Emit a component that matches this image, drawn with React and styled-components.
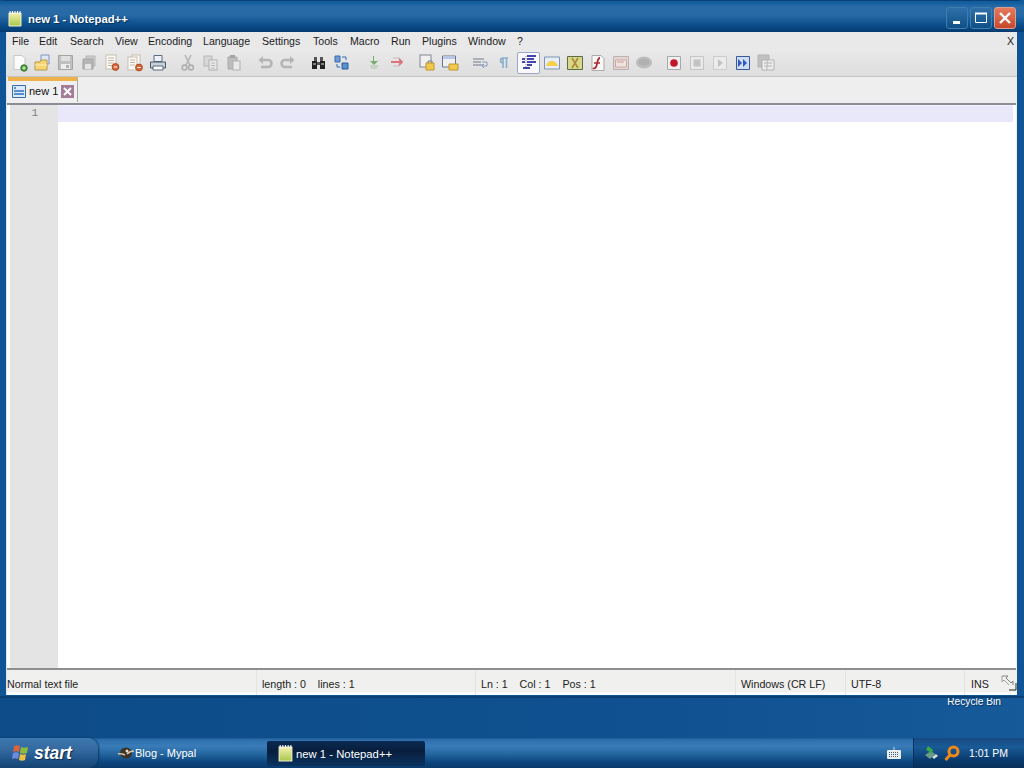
import styled, { createGlobalStyle } from "styled-components";

const GlobalStyle = createGlobalStyle`
    html, body {
        margin: 0;
        height: 100%;
        overflow: hidden;
    }
    body {
        font-family: "Liberation Sans", Arial, sans-serif;
    }
`;

const Screen = styled.div`
    width: 1024px;
    height: 768px;
    display: flex;
    flex-direction: column;
    background: #0e4e8b;
    overflow: hidden;
`;

const Desktop = styled.div`
    height: 738px;
    display: flex;
    flex-direction: column;
    background: linear-gradient(to right, #0d4c88, #0f5090 60%, #165a9a);
`;

const Window = styled.div`
    position: relative;
    z-index: 1;
    height: 698px;
    flex: none;
    display: flex;
    flex-direction: column;
    border-radius: 6px 6px 0 0;
    background: #0f5494;
    border-top: 1px solid #0a3f78;
    border-bottom: 2px solid #0a3f74;
    box-sizing: border-box;
`;

const TitleBar = styled.div`
    height: 31px;
    flex: none;
    box-sizing: border-box;
    display: flex;
    align-items: center;
    padding: 4px 8px 0 7px;
    gap: 5px;
    background: linear-gradient(to bottom, #125a98 0, #12609f 2px, #2a6ba7 6px, #276aa6 14px, #0f5390 22px, #07427c 28px, #063b70 31px);
    color: #fff;
    font-size: 11.3px;
    font-weight: 700;
`;

const TitleText = styled.span`
    flex: 1;
    text-shadow: 1px 1px 1px #06305c;
`;

const WinButtons = styled.div`
    display: flex;
    gap: 2px;
    margin-top: -1px;
`;

const WinButton = styled.div`
    width: 20px;
    height: 20px;
    border-radius: 3px;
    display: grid;
    place-items: center;
    border: 1px solid ${(p) => (p.$close ? "#d8a090" : "#3f7cb0")};
    background: ${(p) => (p.$close ? "linear-gradient(#e47a5c, #c8482c)" : "linear-gradient(#2f70aa, #0f5088)")};
`;

const Body = styled.div`
    flex: 1;
    min-height: 0;
    display: flex;
    flex-direction: column;
    margin: 0 7px 1px 6px;
    border-left: 1px solid #d8e4f0;
    background: #eeeeee;
`;

const MenuBar = styled.div`
    height: 20px;
    flex: none;
    box-sizing: border-box;
    display: flex;
    align-items: center;
    padding: 0 0 2px 5px;
    background: #e9e9ea;
    font-size: 10.6px;
    color: #1c1c1c;
`;

const MenuItem = styled.span`
    width: ${(p) => p.$w}px;
    white-space: nowrap;
`;

const CloseMark = styled.span`
    margin-left: auto;
    margin-right: 3px;
`;

const ToolBar = styled.div`
    height: 25px;
    flex: none;
    box-sizing: border-box;
    display: flex;
    align-items: flex-start;
    padding-left: 1px;
    background: linear-gradient(to bottom, #e8e8e8, #dedede);
    border-bottom: 1px solid #c4c4c4;
`;

const ToolGroup = styled.div`
    display: flex;
    margin-left: ${(p) => p.$gap || 0}px;
`;

const ToolButton = styled.div`
    width: 23px;
    height: 22px;
    box-sizing: border-box;
    display: grid;
    place-items: center;
    opacity: ${(p) => (p.$dim ? 0.75 : 1)};
    ${(p) => p.$active && `
        background: #fafafe;
        border: 1px solid #9aa8cc;
        border-radius: 2px;
    `}
`;

const TabBar = styled.div`
    height: 26px;
    flex: none;
    display: flex;
    align-items: flex-start;
    padding-left: 1px;
    box-sizing: border-box;
    background: #eeeeee;
`;

const Tab = styled.div`
    width: 70px;
    height: 25px;
    box-sizing: border-box;
    display: flex;
    align-items: center;
    gap: 3px;
    padding: 0 0 1px 4px;
    background: #f0f0f0;
    border-top: 4px solid #efb24a;
    border-right: 1px solid #a8a8a8;
    font-size: 11px;
    color: #111;
`;

const Editor = styled.div`
    flex: 1;
    min-height: 0;
    display: flex;
    background: #fff;
    border-top: 2px solid #8c8c94;
    border-bottom: 2px solid #8e8e8e;
    margin-right: 1px;
`;

const Gutter = styled.div`
    width: 48px;
    margin-left: 3px;
    flex: none;
    background: #e4e4e4;
    box-sizing: border-box;
    padding: 2px 20px 0 0;
    text-align: right;
    font-family: "Liberation Mono", monospace;
    font-size: 11px;
    color: #808080;
`;

const TextArea = styled.div`
    flex: 1;
    padding-right: 3px;
`;

const CurrentLine = styled.div`
    height: 16px;
    background: #e8e8fa;
    border-top: 1px solid #f2f2fc;
`;

const StatusBar = styled.div`
    height: 25px;
    flex: none;
    display: flex;
    background: linear-gradient(to bottom, #f0f0ee 88%, #fbfbfb 88%);
    font-size: 10.7px;
    color: #222;
`;

const StatusCell = styled.div`
    width: ${(p) => p.$w}px;
    flex: none;
    box-sizing: border-box;
    display: flex;
    align-items: center;
    padding: 2px 0 0 ${(p) => p.$pad ?? 5}px;
    border-right: 1px solid ${(p) => (p.$last ? "transparent" : "#e4e4e2")};
    white-space: pre;
`;

const Grip = styled.div`
    flex: 1;
    display: flex;
    align-items: center;
    justify-content: flex-end;
`;

const RecycleLabel = styled.div`
    align-self: flex-end;
    margin: -3px 23px 0 0;
    font-size: 10.2px;
    line-height: 13px;
    color: #fff;
    text-shadow: 1px 1px 1px #083560;
`;

const Taskbar = styled.div`
    height: 30px;
    flex: none;
    display: flex;
    background: linear-gradient(to bottom, #1d5a96 0, #2e6fae 2px, #3a7cb8 8px, #24669f 16px, #0c4680 24px, #0a3a6c 30px);
    color: #fff;
    font-size: 11px;
`;

const StartButton = styled.div`
    width: 98px;
    flex: none;
    box-sizing: border-box;
    display: flex;
    align-items: center;
    gap: 4px;
    padding-left: 11px;
    border-radius: 0 10px 10px 0;
    background: linear-gradient(to bottom, #3d78b0, #33699f 40%, #1e5387 75%, #154374);
    box-shadow: 1px 0 2px #0a3560;
    font-size: 17.5px;
    font-weight: 700;
    font-style: italic;
    text-shadow: 1px 1px 1px #0a2c50;
`;

const TaskButton = styled.div`
    width: ${(p) => p.$w}px;
    height: 25px;
    flex: none;
    align-self: ${(p) => (p.$active ? "center" : "flex-start")};
    margin: ${(p) => (p.$active ? "1px 0 0 7px" : "2px 0 0 12px")};
    box-sizing: border-box;
    display: flex;
    align-items: center;
    gap: ${(p) => (p.$active ? 2 : 0)}px;
    padding-left: ${(p) => (p.$active ? 10 : 7)}px;
    border-radius: 2px;
    font-size: ${(p) => (p.$active ? 11.3 : 11)}px;
    background: ${(p) => (p.$active ? "linear-gradient(to bottom, #0a2a52, #081d3c 40%, #0a3360)" : "transparent")};
`;

const QuickTray = styled.div`
    margin-left: auto;
    display: flex;
    align-items: center;
    padding-right: 12px;
`;

const SystemTray = styled.div`
    width: 111px;
    flex: none;
    box-sizing: border-box;
    display: flex;
    align-items: center;
    gap: 2px;
    padding-left: 9px;
    background: linear-gradient(to bottom, #154a82, #1a5a96 30%, #0a3c70 70%, #082f5a);
    border-left: 1px solid #07305c;
    font-size: 10.5px;
`;

const Clock = styled.span`
    margin-left: 6px;
`;

const Svg = ({ children, size = 18 }) => (
    <svg width={size} height={size} viewBox="0 0 18 18" fill="none">
        {children}
    </svg>
);

const Sheet = ({ x = 4, y = 1, w = 10, h = 13, fill = "#fafafa", stroke = "#a8a8a8" }) => (
    <rect x={x} y={y} width={w} height={h} fill={fill} stroke={stroke} />
);

const Lines = ({ x, y, w, n = 3, color = "#777" }) => (
    <path d={Array.from({ length: n }, (_, i) => `M${x} ${y + i * 2.5}h${w}`).join("")} stroke={color} />
);

const icons = {
    newFile: (
        <Svg>
            <path d="M3 1.5h8l3 3v11H3z" fill="#fbfbfb" stroke="#c8c8c8" />
            <circle cx="13" cy="14" r="3.2" fill="#58a848" stroke="#2d6e2a" />
            <path d="M11.5 14h3M13 12.5v3" stroke="#e0f4d8" />
        </Svg>
    ),
    open: (
        <Svg>
            <path d="M7 1h8v9H7z" fill="#dfe6f4" stroke="#7f93c0" />
            <path d="M1 8h5l1-2h6v10H1z" fill="#f6d572" stroke="#b49a4c" />
            <path d="M1 11h12" stroke="#fff0b8" />
        </Svg>
    ),
    save: (
        <Svg>
            <path d="M1.5 1.5h14v14h-14z" fill="#b4b4b4" stroke="#909090" />
            <path d="M4 2h9v5H4z" fill="#dedede" />
            <path d="M4 10h9v5H4z" fill="#f2f2f2" />
            <path d="M9 11h3v3H9z" fill="#a0a0a0" />
        </Svg>
    ),
    saveAll: (
        <Svg>
            <path d="M6 2h9v10H6z" fill="#c4c4c4" stroke="#a8a8a8" />
            <path d="M3 5h10v10H3z" fill="#a8a8a8" stroke="#8c8c8c" />
            <path d="M5 10h6v5H5z" fill="#e6e6e6" />
        </Svg>
    ),
    close: (
        <Svg>
            <Sheet x={3} y={1} w={10} h={14} stroke="#c8c0b0" />
            <Lines x={5} y={4} w={6} n={4} color="#c4b498" />
            <circle cx="12.5" cy="13" r="3.4" fill="#d8683c" stroke="#b04a20" />
            <path d="M10.8 13h3.4" stroke="#fff" />
        </Svg>
    ),
    closeAll: (
        <Svg>
            <Sheet x={6} y={1} w={8} h={12} stroke="#c8c0b0" />
            <Sheet x={2} y={3} w={9} h={13} stroke="#c8c0b0" />
            <Lines x={4} y={6} w={5} n={3} color="#c4b498" />
            <circle cx="13" cy="13.5" r="3.4" fill="#d8683c" stroke="#b04a20" />
            <path d="M11.3 13.5h3.4" stroke="#fff" />
        </Svg>
    ),
    print: (
        <Svg>
            <path d="M5 1.5h8v6H5z" fill="#eef2f8" stroke="#5a6a80" />
            <path d="M1.5 8h15v6h-15z" fill="#c8d0d8" stroke="#4c5868" />
            <path d="M4 12h10v4H4z" fill="#fafafa" stroke="#5a6a80" />
        </Svg>
    ),
    cut: (
        <Svg>
            <path d="M12 1L7 11M6 1l5 10" stroke="#a4a4a4" strokeWidth="1.6" />
            <circle cx="5.5" cy="13.5" r="2.4" stroke="#a0a0a0" strokeWidth="1.6" />
            <circle cx="12" cy="13.5" r="2.4" stroke="#a0a0a0" strokeWidth="1.6" />
        </Svg>
    ),
    copy: (
        <Svg>
            <Sheet x={2} y={2} w={8} h={10} fill="#d4d4d4" stroke="#a8a8a8" />
            <Sheet x={7} y={6} w={8} h={10} fill="#ececec" stroke="#a0a0a0" />
            <Lines x={9} y={9} w={4} color="#a8a8a8" />
        </Svg>
    ),
    paste: (
        <Svg>
            <path d="M3 3h9v12H3z" fill="#b0b0b0" stroke="#989898" />
            <path d="M5 1h5v3H5z" fill="#8e8e8e" />
            <Sheet x={8} y={7} w={7} h={9} fill="#ececec" stroke="#a0a0a0" />
        </Svg>
    ),
    undo: (
        <Svg>
            <path d="M4 6h8a3 3 0 0 1 0 7H5" stroke="#a6a6a6" strokeWidth="2.6" />
            <path d="M7 2L2.5 6 7 10z" fill="#a6a6a6" />
        </Svg>
    ),
    redo: (
        <Svg>
            <path d="M14 6H6a3 3 0 0 0 0 7h7" stroke="#a6a6a6" strokeWidth="2.6" />
            <path d="M11 2l4.5 4L11 10z" fill="#a6a6a6" />
        </Svg>
    ),
    find: (
        <Svg>
            <path d="M2 7h5v8H2zM10 7h5v8h-5z" fill="#222" />
            <path d="M4 3h3v4H4zM10 3h3v4h-3zM7 8h3v3H7z" fill="#555" />
            <path d="M3 10h3M11 10h3" stroke="#ddd" />
        </Svg>
    ),
    replace: (
        <Svg>
            <path d="M2 2h5v6H2z" fill="#6e9ad8" stroke="#3c68a8" />
            <path d="M9 9h6v6H9z" fill="#5a92d0" stroke="#2c5c9c" />
            <path d="M9 3h4v3M7 13H4V10" stroke="#2c6cb8" />
        </Svg>
    ),
    zoomIn: (
        <Svg>
            <path d="M9 2v5h4l-4 4-4-4h3V2z" fill="#4f9a48" />
            <path d="M5 12h8M6 14h6" stroke="#9cb898" />
            <path d="M3 6h2M13 6h2" stroke="#c8d8c8" />
        </Svg>
    ),
    zoomOut: (
        <Svg>
            <path d="M3 8h11M11 5l3 3-3 3" stroke="#d8505a" strokeWidth="1.8" />
            <path d="M5 4h7M5 12h7" stroke="#c4a8ac" />
        </Svg>
    ),
    syncV: (
        <Svg>
            <Sheet x={2} y={1} w={11} h={12} fill="#f0f0f0" stroke="#808890" />
            <path d="M8 9h8v7H8z" fill="#f2c84c" stroke="#c09830" />
            <path d="M10 9V7h4v2" stroke="#808080" />
        </Svg>
    ),
    syncH: (
        <Svg>
            <path d="M1.5 2h13v11h-13z" fill="#f0f0f0" stroke="#687890" />
            <path d="M2 2h12v3H2z" fill="#b8c8e4" />
            <path d="M8 10h9v6H8z" fill="#f2c84c" stroke="#c09830" />
        </Svg>
    ),
    wrap: (
        <Svg>
            <path d="M1 5h11M1 8h8M1 11h10" stroke="#505868" />
            <path d="M10 8h5v4h-5M12 10l-2 2 2 2" stroke="#6088b8" />
        </Svg>
    ),
    pilcrow: (
        <Svg>
            <path d="M8 4h5M8 4a2.500 2.500 0 0 0 0 5M8 4v10M11.500 4v10" stroke="#6c9cc8" strokeWidth="1.600" />
        </Svg>
    ),
    indent: (
        <Svg>
            <path d="M6 2v14" stroke="#888" strokeDasharray="1 1" />
            <path d="M7 2h9M7 5h7M7 8h9M7 11h5M3 14h7M2 5h3M2 8h3" stroke="#0a0a90" strokeWidth="1.6" />
        </Svg>
    ),
    lang: (
        <Svg>
            <path d="M1.5 3h15v12h-15z" fill="#e8eef8" stroke="#7f93b0" />
            <path d="M3 12c1-4 3-5 6-5s5 2 6 5z" fill="#f4d04c" />
        </Svg>
    ),
    docMap: (
        <Svg>
            <path d="M1.5 2.5h15v13h-15z" fill="#d8d888" stroke="#5c6c44" />
            <path d="M6 4l3 5 3 5M12 4l-6 10" stroke="#a88a38" strokeWidth="1.6" />
        </Svg>
    ),
    funcList: (
        <Svg>
            <path d="M3 1.5h9l3 3v12H3z" fill="#f8f8f8" stroke="#b0a8a8" />
            <path d="M11 4C8 4 9 9 7 13c-.5 1-2 2-3 1" stroke="#b02830" strokeWidth="1.8" />
            <path d="M5 9h6" stroke="#b02830" strokeWidth="1.5" />
        </Svg>
    ),
    folderWs: (
        <Svg>
            <path d="M1.5 2.5h15v13h-15z" fill="#e2d0cc" stroke="#b0a0a0" />
            <path d="M3.500 6h11v7h-11z" fill="#f4e4e0" stroke="#c09890" />
            <path d="M5 8h7" stroke="#c08880" />
        </Svg>
    ),
    monitor: (
        <Svg>
            <ellipse cx="9" cy="8.500" rx="8" ry="6" fill="#b0b0b0" />
            <ellipse cx="9" cy="8" rx="5.500" ry="3.500" fill="#a0a0a0" />
        </Svg>
    ),
    record: (
        <Svg>
            <path d="M2.500 2.500h13v13h-13z" fill="#f0f0f0" stroke="#a8a8a8" />
            <circle cx="9" cy="9" r="3.800" fill="#c01828" />
        </Svg>
    ),
    stop: (
        <Svg>
            <path d="M2.500 2.500h13v13h-13z" fill="#ececec" stroke="#bcbcbc" />
            <path d="M5.500 5.500h7v7h-7z" fill="#b8b8b8" />
        </Svg>
    ),
    play: (
        <Svg>
            <path d="M2.500 2.500h13v13h-13z" fill="#efefef" stroke="#c4c4c4" />
            <path d="M7 5l5 4-5 4z" fill="#b8b8b8" />
        </Svg>
    ),
    playMulti: (
        <Svg>
            <path d="M2.500 2.500h13v13h-13z" fill="#d0dcf0" stroke="#3858a0" />
            <path d="M4 5l4 4-4 4zM9 5l4 4-4 4z" fill="#2c58c0" />
        </Svg>
    ),
    saveMacro: (
        <Svg>
            <path d="M1 1h11v12H1z" fill="#b4b4b4" stroke="#a4a4a4" />
            <path d="M5 6h12v10H5z" fill="#efefef" stroke="#a4a4a4" />
            <path d="M7 9h8M7 12h8M10 6v10" stroke="#a8a8a8" />
        </Svg>
    ),
};

const toolGroups = [
    { gap: 0, items: ["newFile", "open", "save", "saveAll", "close", "closeAll", "print"] },
    { gap: 7, items: ["cut", "copy", "paste"] },
    { gap: 8, items: ["undo", "redo"] },
    { gap: 8, items: ["find", "replace"] },
    { gap: 9, items: ["zoomIn", "zoomOut"] },
    { gap: 7, items: ["syncV", "syncH"] },
    { gap: 8, items: ["wrap", "pilcrow"] },
    { gap: 2, items: ["indent", "lang", "docMap", "funcList", "folderWs", "monitor"] },
    { gap: 7, items: ["record", "stop", "play", "playMulti", "saveMacro"] },
];

const dimmed = ["save", "saveAll", "cut", "copy", "paste", "undo", "redo", "wrap", "pilcrow", "zoomIn", "zoomOut", "folderWs", "monitor", "stop", "play", "saveMacro"];

const menus = [
    ["File", 27], ["Edit", 31], ["Search", 45], ["View", 33], ["Encoding", 55], ["Language", 59],
    ["Settings", 51], ["Tools", 37], ["Macro", 41], ["Run", 31], ["Plugins", 46], ["Window", 49], ["?", 10],
];

const NotepadIcon = ({ size = 16 }) => (
    <svg width={size} height={size} viewBox="0 0 16 16">
        <path d="M2 2h12v13H2z" fill="url(#padFill)" stroke="#f4f0d0" />
        <defs>
            <linearGradient id="padFill" x1="0" y1="0" x2="0" y2="1">
                <stop offset="0" stopColor="#f4f0b0" />
                <stop offset="1" stopColor="#a8c848" />
            </linearGradient>
        </defs>
        <path d="M3 0v3M5.500 0v3M8 0v3M10.500 0v3M13 0v3" stroke="#fff" />
    </svg>
);

const TabFileIcon = () => (
    <svg width="14" height="15" viewBox="0 0 14 15">
        <path d="M.5 1.500h13v12H.5z" fill="#dceaf8" stroke="#3c6ca8" />
        <path d="M2 4h2M2 7h10M2 10h10" stroke="#2c70c0" strokeWidth="1.500" />
    </svg>
);

const TabClose = () => (
    <svg width="13" height="13" viewBox="0 0 13 13">
        <rect width="13" height="13" fill="#a47c98" />
        <path d="M3 3l7 7M10 3l-7 7" stroke="#fff" strokeWidth="2" />
    </svg>
);

const StartFlag = () => (
    <svg width="19" height="20" viewBox="0 0 19 20">
        <path d="M3 3c2-1 4-1 6 0l-1 6c-2-1-4-1-6 0z" fill="#d8643c" />
        <path d="M10 4c2 1 4 1 7 0l-1 6c-3 1-5 1-7 0z" fill="#8cbc3c" />
        <path d="M2 10c2-1 4-1 6 0l-1 6c-2-1-4-1-6 0z" fill="#6c8ce0" />
        <path d="M9 11c2 1 4 1 6 0l-1 6c-2 1-4 1-6 0z" fill="#f0c040" />
    </svg>
);

const FoxIcon = () => (
    <svg width="18" height="14" viewBox="0 0 18 14">
        <ellipse cx="9" cy="7" rx="6" ry="5.500" fill="#3c3428" />
        <path d="M1 8c3-1 5 0 7 1M17 5c-3 0-5 1-7 3" stroke="#d8c8a8" strokeWidth="1.500" />
        <circle cx="10" cy="5" r="1.500" fill="#e8e0c8" />
    </svg>
);

const KeyboardIcon = () => (
    <svg width="14" height="12" viewBox="0 0 14 12">
        <path d="M7 0v3" stroke="#c8d8e8" />
        <rect y="3" width="14" height="9" rx="1" fill="#e8eef4" />
        <path d="M2 5.500h10M2 7.500h10M2 9.500h10" stroke="#44586c" strokeDasharray="1 1" />
    </svg>
);

const SafeIcon = () => (
    <svg width="18" height="18" viewBox="0 0 18 18">
        <path d="M2 11l6-4 4 3-5 5z" fill="#6c9c88" />
        <path d="M5 2l5 4-2 5-1-3-4-2z" fill="#38a848" />
        <path d="M9 13l4-3 2 2-4 3z" fill="#d0dcd8" />
    </svg>
);

const SearchTrayIcon = () => (
    <svg width="18" height="18" viewBox="0 0 18 18">
        <circle cx="10.500" cy="7.500" r="4.500" fill="none" stroke="#f08818" strokeWidth="3" />
        <path d="M7 11l-4.500 5" stroke="#f08818" strokeWidth="3" />
    </svg>
);

const ResizeIcon = () => (
    <svg width="16" height="16" viewBox="0 0 16 16" fill="none">
        <path d="M1 1h6l-2 2 5 5 2-2v4" stroke="#808080" />
        <path d="M1 1v6l2-2 5 5" stroke="#a0a0a0" />
        <path d="M15 8v7H8" stroke="#222" />
    </svg>
);

export default function App() {
    return (
        <Screen>
            <GlobalStyle />
            <Desktop>
                <Window>
                    <TitleBar>
                        <NotepadIcon />
                        <TitleText>new 1 - Notepad++</TitleText>
                        <WinButtons>
                            <WinButton>
                                <svg width="10" height="12" viewBox="0 0 10 12">
                                    <path d="M1 9h7v3H1z" fill="#fff" />
                                </svg>
                            </WinButton>
                            <WinButton>
                                <svg width="14" height="14" viewBox="0 0 14 14" fill="none">
                                    <path d="M1.500 2.500h11v9h-11z" stroke="#fff" />
                                    <path d="M1 2.500h12" stroke="#fff" strokeWidth="2" />
                                </svg>
                            </WinButton>
                            <WinButton $close>
                                <svg width="14" height="14" viewBox="0 0 14 14">
                                    <path d="M2 2l10 10M12 2L2 12" stroke="#fff" strokeWidth="2.400" />
                                </svg>
                            </WinButton>
                        </WinButtons>
                    </TitleBar>
                    <Body>
                        <MenuBar>
                            {menus.map(([label, w]) => (
                                <MenuItem key={label} $w={w}>{label}</MenuItem>
                            ))}
                            <CloseMark>X</CloseMark>
                        </MenuBar>
                        <ToolBar>
                            {toolGroups.map((group) => (
                                <ToolGroup key={group.items[0]} $gap={group.gap}>
                                    {group.items.map((name) => (
                                        <ToolButton key={name} $active={name === "indent"} $dim={dimmed.includes(name)}>
                                            {icons[name]}
                                        </ToolButton>
                                    ))}
                                </ToolGroup>
                            ))}
                        </ToolBar>
                        <TabBar>
                            <Tab>
                                <TabFileIcon />
                                <span>new 1</span>
                                <TabClose />
                            </Tab>
                        </TabBar>
                        <Editor>
                            <Gutter>1</Gutter>
                            <TextArea>
                                <CurrentLine />
                            </TextArea>
                        </Editor>
                        <StatusBar>
                            <StatusCell $w={250} $pad={0}>Normal text file</StatusCell>
                            <StatusCell $w={219}>{"length : 0    lines : 1"}</StatusCell>
                            <StatusCell $w={260}>{"Ln : 1    Col : 1    Pos : 1"}</StatusCell>
                            <StatusCell $w={110}>Windows (CR LF)</StatusCell>
                            <StatusCell $w={119}>UTF-8</StatusCell>
                            <StatusCell $w={30} $pad={6} $last>INS</StatusCell>
                            <Grip>
                                <ResizeIcon />
                            </Grip>
                        </StatusBar>
                    </Body>
                </Window>
                <RecycleLabel>Recycle Bin</RecycleLabel>
            </Desktop>
            <Taskbar>
                <StartButton>
                    <StartFlag />
                    <span>start</span>
                </StartButton>
                <TaskButton $w={150}>
                    <FoxIcon />
                    <span>Blog - Mypal</span>
                </TaskButton>
                <TaskButton $active $w={158}>
                    <NotepadIcon size={17} />
                    <span>new 1 - Notepad++</span>
                </TaskButton>
                <QuickTray>
                    <KeyboardIcon />
                </QuickTray>
                <SystemTray>
                    <SafeIcon />
                    <SearchTrayIcon />
                    <Clock>1:01 PM</Clock>
                </SystemTray>
            </Taskbar>
        </Screen>
    );
}
